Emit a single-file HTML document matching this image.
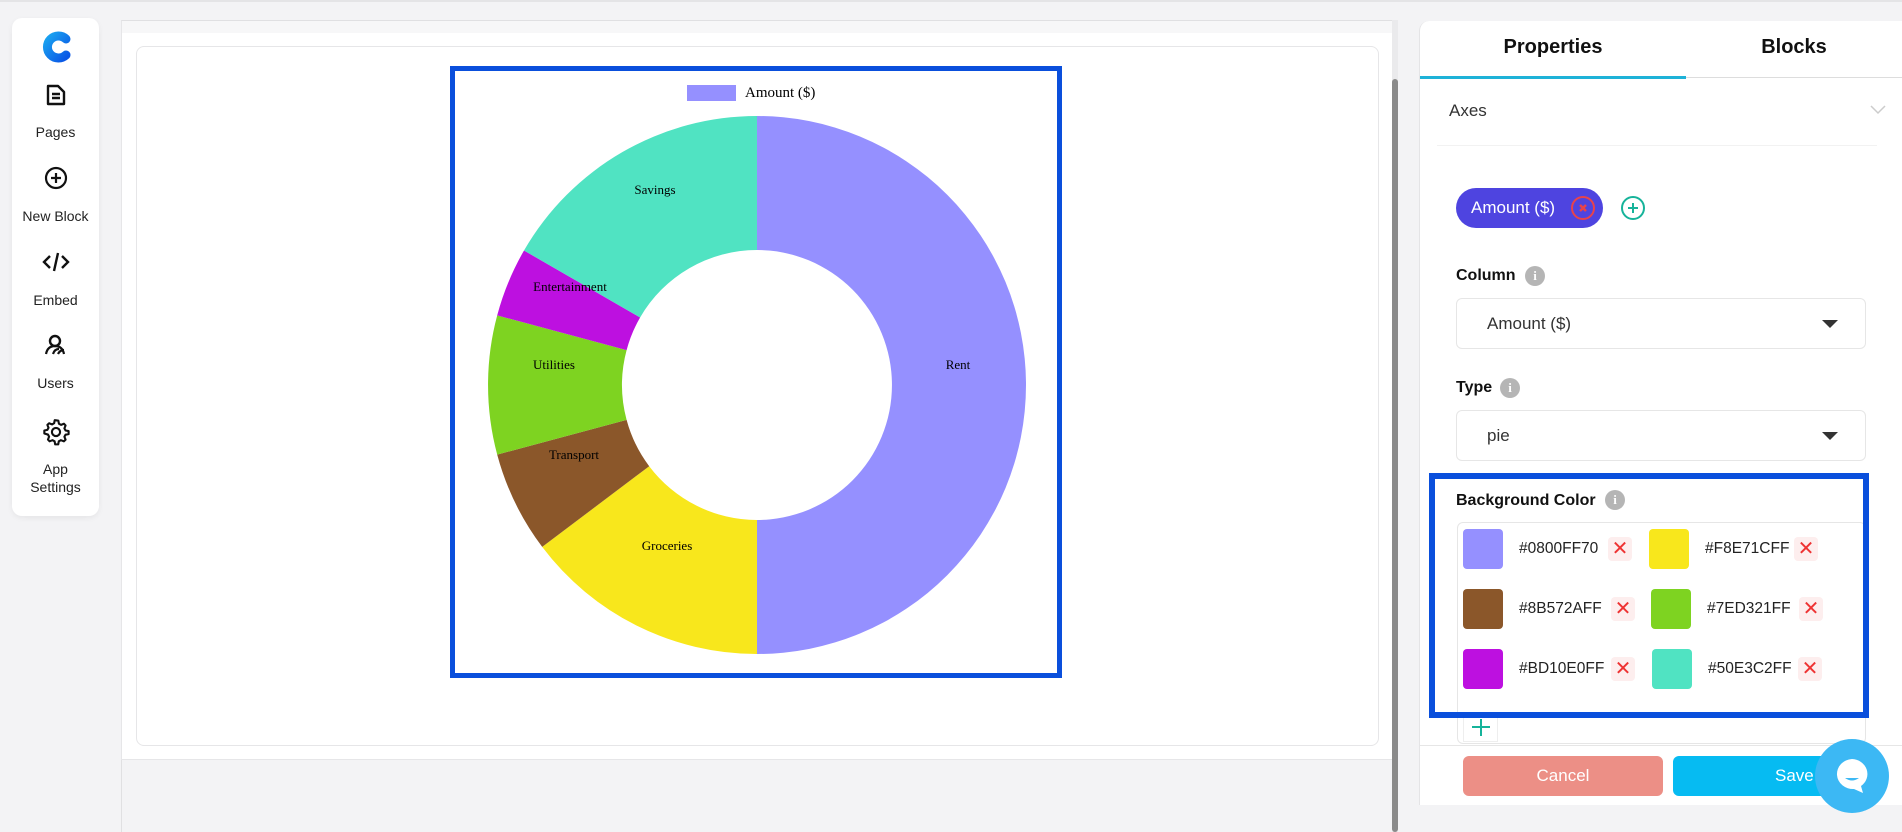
<!DOCTYPE html>
<html><head><meta charset="utf-8"><style>
*{box-sizing:border-box;margin:0;padding:0}
body{width:1902px;height:832px;background:#f3f3f5;font-family:"Liberation Sans",sans-serif;position:relative;overflow:hidden;color:#111}
.abs{position:absolute}
.side{left:12px;top:18px;width:87px;height:498px;background:#fff;border-radius:10px;box-shadow:0 2px 6px rgba(0,0,0,.06)}
.si{position:absolute;left:0;width:87px;text-align:center;font-size:14px;color:#222}
.lbl{font-size:16px;font-weight:bold;color:#111}
.sel{border:1px solid #e6e6e6;border-radius:6px;background:#fff}
.tri{width:0;height:0;border-left:8px solid transparent;border-right:8px solid transparent;border-top:8px solid #333}
.sw{width:40px;height:40px;border-radius:4px}
.ht{font-size:15.5px;color:#222}
.xb{width:24px;height:24px;background:#fdeeee;border-radius:4px;color:#e33;font-size:20px;line-height:24px;text-align:center}
</style></head><body>
<div class="abs" style="left:0;top:0;width:1902px;height:2px;background:#e4e4e6"></div>
<div class="abs side">
 <svg class="abs" style="left:29px;top:13px" width="30" height="32" viewBox="0 0 30 32"><defs><linearGradient id="g" x1="0" y1="0" x2="1" y2="1"><stop offset="0" stop-color="#1aa3f0"/><stop offset="1" stop-color="#0a58e6"/></linearGradient></defs><path d="M25 8 A11 11 0 1 0 25 24" fill="none" stroke="url(#g)" stroke-width="9" stroke-linecap="round"/></svg>
 <svg class="abs" style="left:33px;top:65px" width="22" height="24" viewBox="0 0 22 24"><path d="M3 3 h10 l6 6 v12 h-16z M7 11h8 M7 15h8" fill="none" stroke="#111" stroke-width="2.4" stroke-linejoin="round"/></svg>
 <div class="si" style="top:106px">Pages</div>
 <svg class="abs" style="left:32px;top:148px" width="24" height="24" viewBox="0 0 24 24"><circle cx="12" cy="12" r="10" fill="none" stroke="#111" stroke-width="2.2"/><path d="M12 7v10M7 12h10" stroke="#111" stroke-width="2.2"/></svg>
 <div class="si" style="top:190px">New Block</div>
 <svg class="abs" style="left:30px;top:232px" width="28" height="24" viewBox="0 0 28 24"><path d="M8 6l-6 6 6 6M20 6l6 6-6 6M16 3l-4 18" fill="none" stroke="#111" stroke-width="2.4"/></svg>
 <div class="si" style="top:274px">Embed</div>
 <svg class="abs" style="left:31px;top:315px" width="26" height="24" viewBox="0 0 26 24"><circle cx="12" cy="8" r="5" fill="none" stroke="#111" stroke-width="2.4"/><path d="M3 21c1-5 4-8 9-8s8 3 9 8M10 21c1-3 3-5 6-5M15 21c1-2 3-4 6-4" fill="none" stroke="#111" stroke-width="2.2"/></svg>
 <div class="si" style="top:357px">Users</div>
 <svg class="abs" style="left:30px;top:400px" width="28" height="28" viewBox="0 0 24 24"><path d="M12 2l2 .3.5 2.6 1.8 1 2.5-1 1.4 1.5-1 2.5 1 1.8 2.6.5v2.6l-2.6.5-1 1.8 1 2.5-1.5 1.4-2.5-1-1.8 1-.5 2.6h-2.6l-.5-2.6-1.8-1-2.5 1-1.4-1.5 1-2.5-1-1.8L2 13.3v-2.6l2.6-.5 1-1.8-1-2.5L6.1 4.5l2.5 1 1.8-1 .5-2.6z" fill="none" stroke="#111" stroke-width="1.8" stroke-linejoin="round"/><circle cx="12" cy="12" r="3.5" fill="none" stroke="#111" stroke-width="1.8"/></svg>
 <div class="si" style="top:442px;line-height:18px">App<br>Settings</div>
</div>

<div class="abs" style="left:121px;top:20px;width:1271px;height:740px;background:#fff;border-left:1px solid #e6e6e8;border-top:1px solid #e0e0e2;border-bottom:1px solid #e6e6e8"></div>
<div class="abs" style="left:122px;top:21px;width:1270px;height:12px;background:#f7f7f8"></div>
<div class="abs" style="left:121px;top:760px;width:1px;height:72px;background:#e0e0e2"></div>
<div class="abs" style="left:1392px;top:20px;width:6px;height:812px;background:#eaeaec"></div>
<div class="abs" style="left:1392px;top:79px;width:6px;height:753px;background:#8a8a8a;border-radius:3px"></div>
<div class="abs" style="left:136px;top:46px;width:1243px;height:700px;border:1px solid #e6e6e8;border-radius:8px;background:#fff"></div>

<div class="abs" style="left:450px;top:66px;width:612px;height:612px;border:5px solid #0a4fdc"></div>
<svg class="abs" style="left:0;top:0" width="1400" height="800" font-family="Liberation Serif,serif" font-size="13">
 <rect x="687" y="85" width="49" height="16" fill="#9590ff"/>
 <text x="745" y="97" font-size="15">Amount ($)</text>
 <path d="M757,116 A269,269 0 0 1 757,654 L757,520 A135,135 0 0 0 757,250Z" fill="#9590ff"/>
 <path d="M757,654 A269,269 0 0 1 542.2,546.9 L649.2,466.2 A135,135 0 0 0 757,520Z" fill="#f8e71c"/>
 <path d="M542.2,546.9 A269,269 0 0 1 497.2,454.6 L626.6,419.9 A135,135 0 0 0 649.2,466.2Z" fill="#8b572a"/>
 <path d="M497.2,454.6 A269,269 0 0 1 497.2,315.4 L626.6,350.1 A135,135 0 0 0 626.6,419.9Z" fill="#7ed321"/>
 <path d="M497.2,315.4 A269,269 0 0 1 524,250.5 L640.1,317.5 A135,135 0 0 0 626.6,350.1Z" fill="#bd10e0"/>
 <path d="M524,250.5 A269,269 0 0 1 757,116 L757,250 A135,135 0 0 0 640.1,317.5Z" fill="#50e3c2"/>
 <text x="958" y="369" text-anchor="middle">Rent</text>
 <text x="655" y="194" text-anchor="middle">Savings</text>
 <text x="570" y="291" text-anchor="middle">Entertainment</text>
 <text x="554" y="369" text-anchor="middle">Utilities</text>
 <text x="574" y="459" text-anchor="middle">Transport</text>
 <text x="667" y="550" text-anchor="middle">Groceries</text>
</svg>

<div class="abs" style="left:1419px;top:21px;width:483px;height:784px;background:#fff;border-radius:10px 0 0 0;border-left:1px solid #e4e4e6"></div>
<div class="abs" style="left:1420px;top:36px;width:266px;text-align:center;font-size:20px;font-weight:bold">Properties</div>
<div class="abs" style="left:1686px;top:36px;width:216px;text-align:center;font-size:20px;font-weight:bold">Blocks</div>
<div class="abs" style="left:1420px;top:77px;width:482px;height:1px;background:#ddd"></div>
<div class="abs" style="left:1420px;top:76px;width:266px;height:3px;background:#1eb2d8"></div>
<div class="abs" style="left:1449px;top:101px;font-size:17px;color:#333">Axes</div>
<svg class="abs" style="left:1870px;top:105px" width="16" height="10"><path d="M1 1l7 7 7-7" fill="none" stroke="#ccc" stroke-width="1.5"/></svg>
<div class="abs" style="left:1437px;top:145px;width:440px;height:1px;background:#f2f2f2"></div>
<div class="abs" style="left:1456px;top:188px;width:147px;height:40px;border-radius:20px;background:#4e44e0;color:#fff;font-size:17px;line-height:40px;padding-left:15px">Amount ($)</div>
<svg class="abs" style="left:1570px;top:195px" width="26" height="26"><circle cx="13" cy="13" r="11" fill="none" stroke="#e8434b" stroke-width="2"/><path d="M10 10l6 6M16 10l-6 6" stroke="#e8434b" stroke-width="2.5"/></svg>
<svg class="abs" style="left:1620px;top:195px" width="26" height="26"><circle cx="13" cy="13" r="11" fill="none" stroke="#16b39a" stroke-width="2"/><path d="M13 8v10M8 13h10" stroke="#16b39a" stroke-width="2"/></svg>
<div class="abs lbl" style="left:1456px;top:267px">Column</div>
<div class="abs" style="left:1525px;top:266px;width:20px;height:20px;border-radius:50%;background:#b5b5b5;color:#fff;font-size:13px;font-weight:bold;text-align:center;line-height:20px;font-family:'Liberation Serif',serif">i</div>
<div class="abs sel" style="left:1456px;top:298px;width:410px;height:51px"></div>
<div class="abs" style="left:1487px;top:314px;font-size:17px;color:#333">Amount ($)</div>
<div class="abs tri" style="left:1822px;top:320px"></div>
<div class="abs lbl" style="left:1456px;top:379px">Type</div>
<div class="abs" style="left:1500px;top:378px;width:20px;height:20px;border-radius:50%;background:#b5b5b5;color:#fff;font-size:13px;font-weight:bold;text-align:center;line-height:20px;font-family:'Liberation Serif',serif">i</div>
<div class="abs sel" style="left:1456px;top:410px;width:410px;height:51px"></div>
<div class="abs" style="left:1487px;top:426px;font-size:17px;color:#333">pie</div>
<div class="abs tri" style="left:1822px;top:432px"></div>

<div class="abs sel" style="left:1457px;top:522px;width:409px;height:222px"></div>
<div class="abs" style="left:1429px;top:473px;width:440px;height:245px;border:6px solid #0a4fdc"></div>
<div class="abs lbl" style="left:1456px;top:492px">Background Color</div>
<div class="abs" style="left:1605px;top:490px;width:20px;height:20px;border-radius:50%;background:#b5b5b5;color:#fff;font-size:13px;font-weight:bold;text-align:center;line-height:20px;font-family:'Liberation Serif',serif">i</div>

<div class="abs sw" style="left:1463px;top:529px;background:#9590ff"></div>
<div class="abs ht" style="left:1519px;top:540px">#0800FF70</div>
<div class="abs xb" style="left:1608px;top:537px">✕</div>
<div class="abs sw" style="left:1649px;top:529px;background:#f8e71c"></div>
<div class="abs ht" style="left:1705px;top:540px">#F8E71CFF</div>
<div class="abs xb" style="left:1794px;top:537px">✕</div>

<div class="abs sw" style="left:1463px;top:589px;background:#8b572a"></div>
<div class="abs ht" style="left:1519px;top:600px">#8B572AFF</div>
<div class="abs xb" style="left:1611px;top:597px">✕</div>
<div class="abs sw" style="left:1651px;top:589px;background:#7ed321"></div>
<div class="abs ht" style="left:1707px;top:600px">#7ED321FF</div>
<div class="abs xb" style="left:1799px;top:597px">✕</div>

<div class="abs sw" style="left:1463px;top:649px;background:#bd10e0"></div>
<div class="abs ht" style="left:1519px;top:660px">#BD10E0FF</div>
<div class="abs xb" style="left:1611px;top:657px">✕</div>
<div class="abs sw" style="left:1652px;top:649px;background:#50e3c2"></div>
<div class="abs ht" style="left:1708px;top:660px">#50E3C2FF</div>
<div class="abs xb" style="left:1798px;top:657px">✕</div>

<div class="abs" style="left:1463px;top:718px;width:35px;height:24px;border:1px solid #eee;border-top:none"></div>
<svg class="abs" style="left:1470px;top:716px" width="22" height="22"><path d="M11 3v17M2 11h18" stroke="#16b39a" stroke-width="2"/></svg>

<div class="abs" style="left:1420px;top:745px;width:482px;height:1px;background:#e6e6e6"></div>
<div class="abs" style="left:1463px;top:756px;width:200px;height:40px;border-radius:6px;background:#ec8f86;color:#fff;font-size:17px;text-align:center;line-height:40px">Cancel</div>
<div class="abs" style="left:1673px;top:756px;width:200px;height:40px;border-radius:6px;background:#06bbf2;color:#fff;font-size:17px;line-height:40px;padding-left:102px">Save</div>
<div class="abs" style="left:1815px;top:739px;width:74px;height:74px;border-radius:50%;background:#3cb8f4"></div>
<svg class="abs" style="left:1832px;top:756px" width="40" height="40"><path d="M20 3a16 15 0 1 0 2 30l9 4-2-7A16 15 0 0 0 20 3z" fill="#fff"/><path d="M13 22q7 5 14 0" fill="#3cb8f4"/></svg>
</body></html>
